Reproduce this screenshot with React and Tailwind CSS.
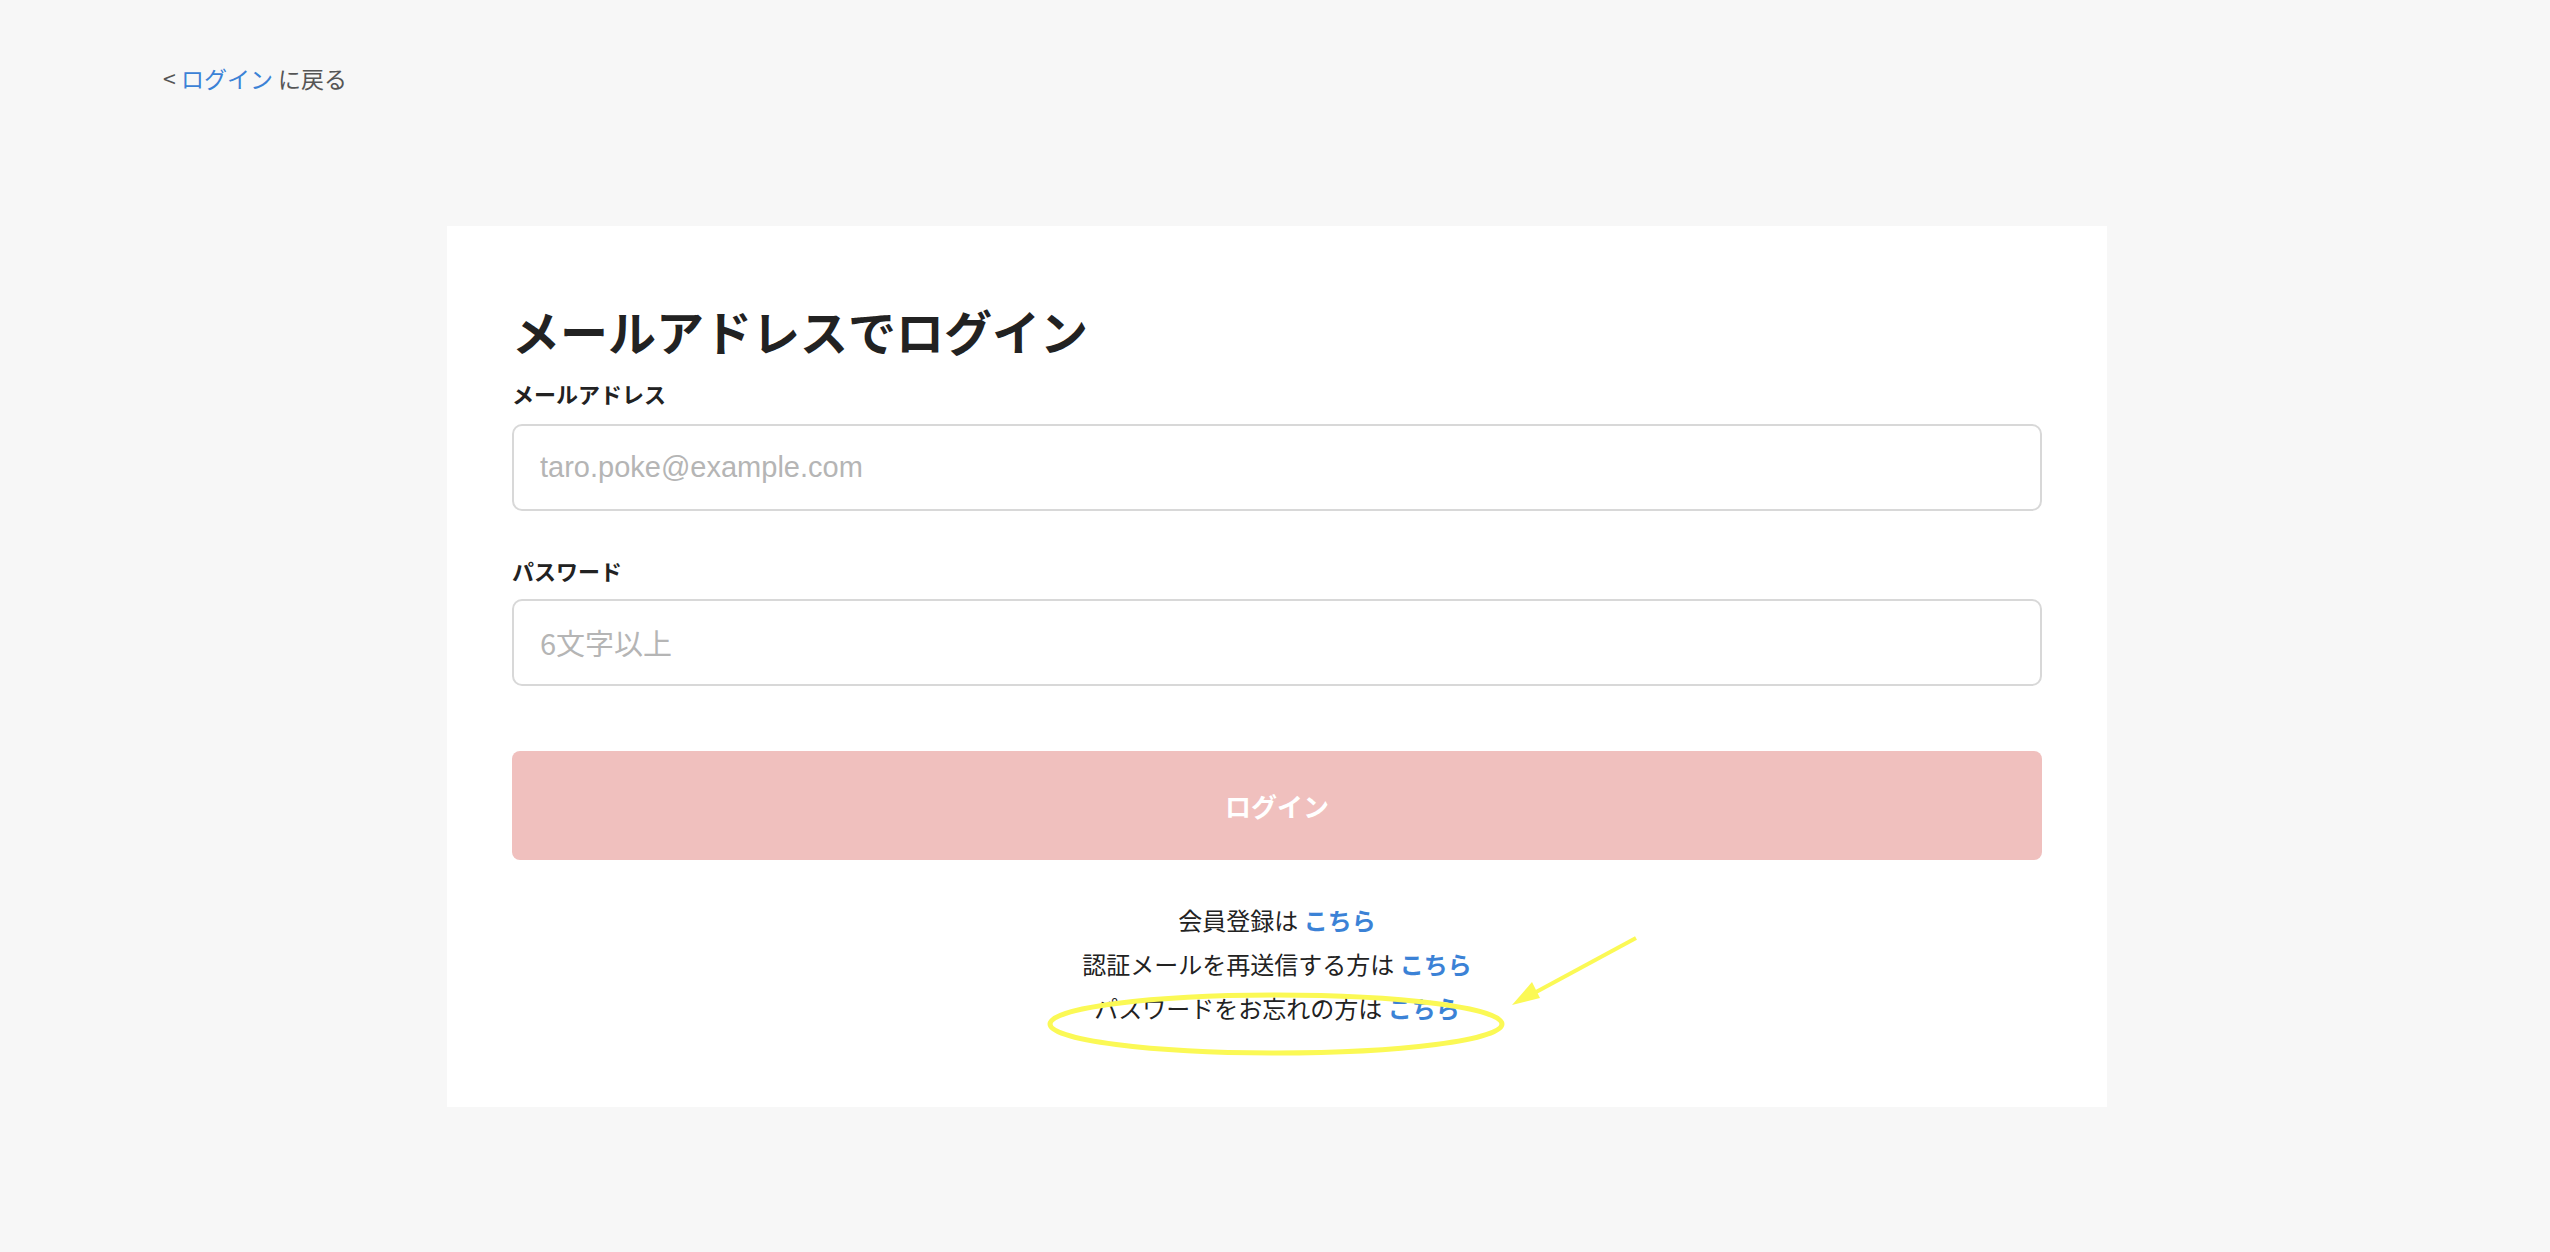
export default function App() {
  const f = { fontFamily: '"Noto Sans CJK JP", "Noto Sans", sans-serif' };
  return (
    <div className="min-h-[1252px] w-full bg-[#f7f7f7] relative" style={f}>
      <div className="pt-[60px] pl-[163px] text-[23px] text-[#555] leading-[36px]">
        &lt; <span className="text-[#3b82d6]">ログイン</span> に戻る
      </div>
      <div className="mt-[130px] ml-[447px] w-[1660px] h-[881px] bg-white px-[65px] pt-[70px] relative">
        <h1 className="text-[48px] font-bold text-[#222] leading-[68px]">メールアドレスでログイン</h1>
        <div className="mt-[12px] text-[22px] font-bold text-[#222] leading-[34px]">メールアドレス</div>
        <div className="mt-[14px] h-[87px] border-2 border-[#d8d8d8] rounded-[10px] flex items-center px-[26px] text-[29px] text-[#b5b5b5]" style={{ fontFamily: '"Liberation Sans", Arial, sans-serif' }}>
          taro.poke@example.com
        </div>
        <div className="mt-[42px] text-[22px] font-bold text-[#222] leading-[34px]">パスワード</div>
        <div className="mt-[12px] h-[87px] border-2 border-[#d8d8d8] rounded-[10px] flex items-center px-[26px] text-[29px] text-[#b5b5b5]">
          6文字以上
        </div>
        <div className="mt-[65px] h-[109px] bg-[#f0c0be] rounded-[8px] flex items-center justify-center text-white font-bold text-[26px]">
          ログイン
        </div>
        <div className="mt-[38px] flex flex-col items-center text-[24px] text-[#222] leading-[44px]">
          <div>会員登録は <span className="text-[#3b82d6] font-bold">こちら</span></div>
          <div>認証メールを再送信する方は <span className="text-[#3b82d6] font-bold">こちら</span></div>
          <div>パスワードをお忘れの方は <span className="text-[#3b82d6] font-bold">こちら</span></div>
        </div>
      </div>
      <svg className="absolute left-0 top-0 pointer-events-none" width="2550" height="1252">
        <ellipse cx="1276" cy="1024" rx="226" ry="29" fill="none" stroke="#fbf955" strokeWidth="5" />
        <line x1="1636" y1="938" x2="1525" y2="998" stroke="#fbf955" strokeWidth="4" />
        <polygon points="1512,1005 1532,982 1540,998" fill="#fbf955" />
      </svg>
    </div>
  );
}
